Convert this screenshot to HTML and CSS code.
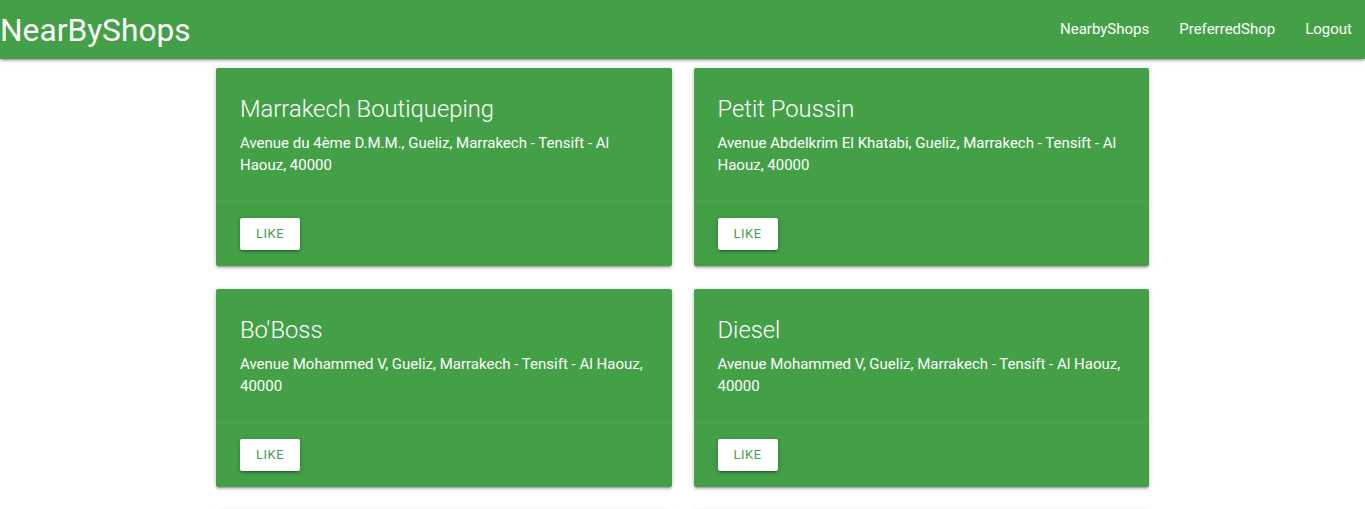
FILE: index.html
```html
<!DOCTYPE html>
<html>
<head>
<meta charset="utf-8">
<link rel="stylesheet" href="styles.css">
</head>
<body>
<nav class="navbar">
  <a class="brand" href="#">NearByShops</a>
  <ul class="nav-links">
    <li><a href="#">NearbyShops</a></li>
    <li><a href="#">PreferredShop</a></li>
    <li><a href="#">Logout</a></li>
  </ul>
</nav>
<main class="container">
  <div class="grid">
    <div class="card">
      <div class="card-content">
        <span class="card-title">Marrakech Boutiqueping</span>
        <p>Avenue du 4ème D.M.M., Gueliz, Marrakech - Tensift - Al Haouz, 40000</p>
      </div>
      <div class="card-action"><button class="btn">Like</button></div>
    </div>
    <div class="card">
      <div class="card-content">
        <span class="card-title">Petit Poussin</span>
        <p>Avenue Abdelkrim El Khatabi, Gueliz, Marrakech - Tensift - Al Haouz, 40000</p>
      </div>
      <div class="card-action"><button class="btn">Like</button></div>
    </div>
    <div class="card">
      <div class="card-content">
        <span class="card-title">Bo'Boss</span>
        <p>Avenue Mohammed V, Gueliz, Marrakech - Tensift - Al Haouz, 40000</p>
      </div>
      <div class="card-action"><button class="btn">Like</button></div>
    </div>
    <div class="card">
      <div class="card-content">
        <span class="card-title">Diesel</span>
        <p>Avenue Mohammed V, Gueliz, Marrakech - Tensift - Al Haouz, 40000</p>
      </div>
      <div class="card-action"><button class="btn">Like</button></div>
    </div>
    <div class="card">
      <div class="card-content">
        <span class="card-title">Zara</span>
        <p>Avenue Mohammed V, Gueliz, Marrakech - Tensift - Al Haouz, 40000</p>
      </div>
      <div class="card-action"><button class="btn">Like</button></div>
    </div>
    <div class="card">
      <div class="card-content">
        <span class="card-title">Mango</span>
        <p>Avenue Mohammed V, Gueliz, Marrakech - Tensift - Al Haouz, 40000</p>
      </div>
      <div class="card-action"><button class="btn">Like</button></div>
    </div>
  </div>
</main>
</body>
</html>
```
FILE: styles.css
```css
* { box-sizing: border-box; }
html { font-size: 15px; }
body {
  margin: 0;
  font-family: Roboto, "Liberation Sans", sans-serif;
  color: rgba(0,0,0,0.87);
  background: #fff;
}
.navbar {
  position: relative;
  z-index: 2;
  height: 59px;
  background: #43a047;
  display: flex;
  align-items: center;
  justify-content: space-between;
  box-shadow: 0 2px 2px 0 rgba(0,0,0,0.14), 0 3px 1px -2px rgba(0,0,0,0.12), 0 1px 5px 0 rgba(0,0,0,0.2);
}
.brand {
  color: #fff;
  text-decoration: none;
  font-size: 31.7px;
  line-height: 59px;
  padding-top: 1px;
}
.nav-links {
  list-style: none;
  margin: 0 -2px 0 0;
  padding: 0;
  display: flex;
}
.nav-links a {
  display: block;
  color: #fff;
  text-decoration: none;
  font-size: 15px;
  padding: 0 15px;
  line-height: 59px;
}
.container {
  width: 70%;
  margin: 0 auto;
  padding: 8.5px 11.25px 0;
}
.grid {
  display: grid;
  grid-template-columns: 1fr 1fr;
  column-gap: 22px;
  row-gap: 22.5px;
}
.card {
  background: #43a047;
  border-radius: 2px;
  box-shadow: 0 2px 2px 0 rgba(0,0,0,0.14), 0 3px 1px -2px rgba(0,0,0,0.12), 0 1px 5px 0 rgba(0,0,0,0.2);
  color: #fff;
}
.card-content {
  padding: 24px;
}
.card-title {
  display: block;
  font-size: 23.8px;
  font-weight: 300;
  line-height: 32px;
  padding-top: 1px;
  margin-bottom: 7px;
}
.card-content p {
  margin: 0;
  font-size: 15px;
  line-height: 22.5px;
}
.card-action {
  border-top: 1px solid rgba(160,160,160,0.2);
  padding: 16px 24px 16.5px;
}
.btn {
  display: block;
  height: 32px;
  padding: 0 16px;
  border: none;
  border-radius: 2px;
  background: #fff;
  color: #43a047;
  font-family: Roboto, "Liberation Sans", sans-serif;
  font-size: 13px;
  letter-spacing: 0.5px;
  text-transform: uppercase;
  box-shadow: 0 2px 2px 0 rgba(0,0,0,0.14), 0 3px 1px -2px rgba(0,0,0,0.12), 0 1px 5px 0 rgba(0,0,0,0.2);
  cursor: pointer;
}
```
